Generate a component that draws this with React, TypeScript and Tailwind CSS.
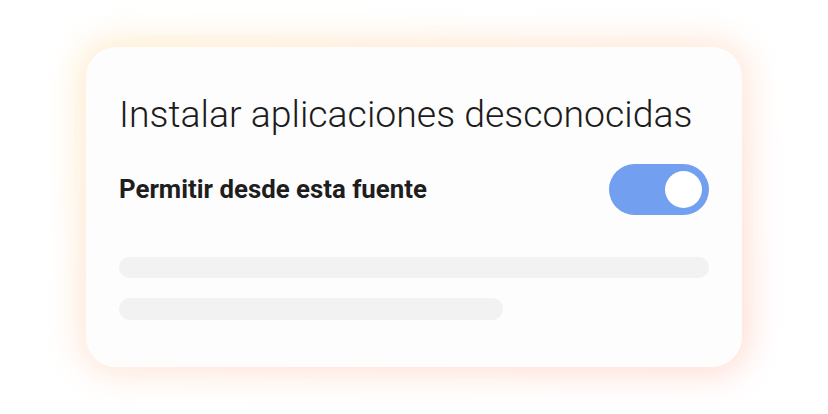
export default function App() {
  return (
    <div className="w-[828px] h-[414px] bg-white pt-[47px] pl-[86px] font-['Roboto',sans-serif]">
      <div className="relative w-[656px] h-[320px]">
        {/* warm glow behind the card */}
        <div className="absolute -inset-[8px] rounded-[38px] bg-gradient-to-br from-[#ffe4b3] via-[#ffdcc6] to-[#ffcabd] blur-[16px] opacity-65" />

        <div className="relative h-full rounded-[30px] bg-[#fdfdfd] px-[33px] pt-[45px] flex flex-col">
          <h1 className="text-[37.4px] leading-[44px] font-light text-[#1c1c1c]">
            Instalar aplicaciones desconocidas
          </h1>

          <div className="mt-[28px] flex items-center justify-between">
            <span className="text-[25.8px] font-bold text-[#1e1e1e]">Permitir desde esta fuente</span>
            <div className="w-[100px] h-[51px] rounded-full bg-[#739ff1] flex items-center justify-end pr-[7px]">
              <div className="w-[37px] h-[37px] rounded-full bg-white" />
            </div>
          </div>

          <div className="mt-[42px] h-[21px] w-full rounded-full bg-[#f2f2f2]" />
          <div className="mt-[20px] h-[22px] w-[384px] rounded-full bg-[#f2f2f2]" />
        </div>
      </div>
    </div>
  );
}
